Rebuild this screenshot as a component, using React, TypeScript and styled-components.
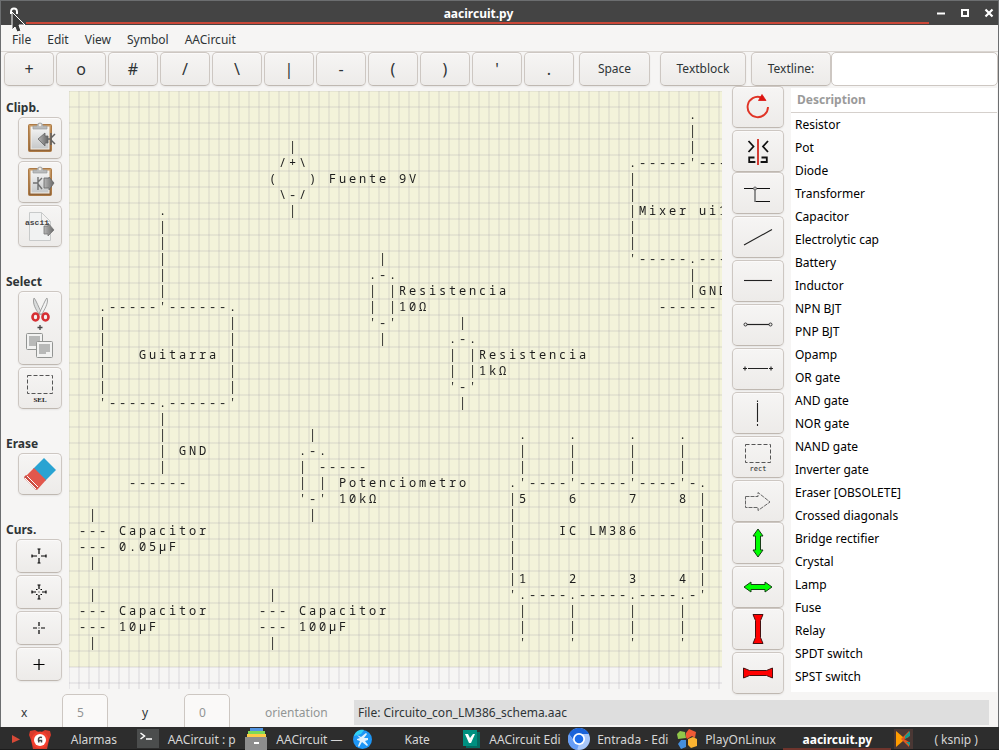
import React from "react";
import styled, { createGlobalStyle } from "styled-components";

const GlobalStyle = createGlobalStyle`
  *, *::before, *::after { box-sizing: border-box; }
  html, body, #root { height: 100%; }
  body {
    margin: 0;
    background: #6c6e70;
    color: #2e3436;
    font: 12px/18px "Noto Sans", "Open Sans", sans-serif;
  }
  button, input { font: inherit; color: inherit; margin: 0; }
`;

const Desktop = styled.div`
  display: flex;
  flex-direction: column;
  height: 100vh;
  min-height: 750px;
`;

const Window = styled.main`
  display: flex;
  flex-direction: column;
  flex: 1;
  min-height: 0;
  margin: 1px 1px 0;
  background: #f6f5f4;
`;

const TitleBar = styled.header`
  position: relative;
  display: grid;
  grid-template-columns: 44px 1fr 60px;
  align-items: center;
  height: 24px;
  background: #444444;
  color: #ffffff;
`;

const Title = styled.h1`
  margin: 0;
  padding: 2px 26px 0 0;
  font-size: 12px;
  line-height: 22px;
  text-align: center;
`;

const TitleAccent = styled.div`
  position: absolute;
  left: 25px;
  right: 69px;
  bottom: 1px;
  height: 2px;
  background: #cb4838;
`;

const TitleIcon = styled.div`
  padding-left: 8px;
  height: 18px;
`;

const Pointer = styled.svg`
  position: absolute;
  left: 9px;
  top: 10px;
  z-index: 2;
`;

const WindowControls = styled.div`
  display: flex;
  justify-content: flex-end;
  gap: 12px;
  padding-right: 3px;
`;

const ControlButton = styled.button`
  width: 12px;
  height: 14px;
  padding: 0;
  border: 0;
  background: none;
  line-height: 0;
`;

const MenuBar = styled.nav`
  display: flex;
  height: 27px;
  padding: 0 3px;
  border-bottom: 1px solid #dad6d2;
`;

const MenuItem = styled.button`
  padding: 3px 8px 0;
  border: 0;
  background: none;
`;

const RaisedButton = styled.button`
  display: flex;
  align-items: center;
  justify-content: center;
  flex: none;
  padding: 0;
  border: 1px solid #cdc7c2;
  border-bottom-color: #bfb8b1;
  border-radius: 5px;
  background: linear-gradient(#f6f5f4, #edebe9);
  box-shadow: inset 0 1px #fbfafa, 0 1px 2px rgba(0, 0, 0, 0.07);
`;

const Toolbar = styled.div`
  display: flex;
  height: 34px;
  padding-left: 3px;
`;

const Glyphs = styled.div`
  display: flex;
  gap: 2px;
  margin-right: 5px;
`;

const GlyphButton = styled(RaisedButton)`
  width: 50px;
  font-size: 16px;
`;

const WordButton = styled(RaisedButton)<{ $width: number; $after?: number }>`
  width: ${(p) => p.$width}px;
  margin-right: ${(p) => p.$after ?? 0}px;
`;

const LineInput = styled.input`
  flex: 1;
  min-width: 0;
  padding: 0 8px;
  border: 1px solid #cdc7c2;
  border-radius: 5px;
  background: #ffffff;
`;

const Workspace = styled.div`
  display: flex;
  flex: 1;
  min-height: 0;
`;

const SideTools = styled.aside`
  display: flex;
  flex-direction: column;
  flex: none;
  gap: 26px;
  width: 68px;
  padding: 13px 7px 0 5px;
`;

const SideGroup = styled.section`
  display: flex;
  flex-direction: column;
  align-items: flex-end;
  gap: 2px;
`;

const SideLabel = styled.h2`
  align-self: flex-start;
  margin: 0 0 -2px;
  font-size: 12px;
  line-height: 18px;
`;

const SideButton = styled(RaisedButton)<{ $w?: number; $h?: number }>`
  width: ${(p) => p.$w ?? 44}px;
  height: ${(p) => p.$h ?? 42}px;
`;

const Sheet = styled.div`
  flex: 1;
  min-width: 0;
  margin: 5px 0 3px;
  overflow: hidden;
  background:
    repeating-linear-gradient(90deg, rgba(150, 146, 160, 0.15) 0 1px, transparent 1px 9px, rgba(150, 146, 160, 0.15) 9px 10px),
    repeating-linear-gradient(rgba(150, 146, 160, 0.15) 0 1px, transparent 1px 15px, rgba(150, 146, 160, 0.15) 15px 16px),
    linear-gradient(#f3f3da, #f3f3da) 0 0 / 100% 576px no-repeat;
`;

const Drawing = styled.div`
  will-change: transform;
`;

const Line = styled.div`
  height: 16px;
  color: #1c1c1c;
  font: 12px/16px "Noto Sans Mono", "DejaVu Sans Mono", monospace;
  white-space: pre;
`;

const Cell = styled.span`
  display: inline-block;
  width: 10px;
  height: 16px;
  vertical-align: top;
`;

const DrawTools = styled.aside`
  display: flex;
  flex-direction: column;
  flex: none;
  width: 52px;
  margin: 0 7px 0 10px;
`;

const DrawGroup = styled.div`
  display: flex;
  flex-direction: column;
  gap: 2px;
`;

const DrawButton = styled(RaisedButton)`
  width: 100%;
  height: 42px;
`;

const Library = styled.section`
  flex: none;
  width: 206px;
  margin: 2px 1px 0 0;
  background: #ffffff;
  color: #000000;
`;

const LibraryHeader = styled.h2`
  height: 25px;
  margin: 0;
  padding: 2px 6px 0;
  border-bottom: 1px solid #d5d0cc;
  color: #9a9a9a;
  font-size: 12px;
  line-height: 20px;
`;

const LibraryList = styled.ul`
  margin: 0;
  padding: 0;
  list-style: none;
`;

const LibraryItem = styled.li`
  height: 23px;
  padding: 0 4px;
  line-height: 23px;
`;

const StatusBar = styled.footer`
  display: flex;
  align-items: center;
  height: 35px;
  padding: 2px 9px 0 20px;
  overflow: hidden;
`;

const CoordLabel = styled.label`
  display: flex;
  align-items: center;
  height: 100%;
`;

const CoordName = styled.span<{ $width: number }>`
  width: ${(p) => p.$width}px;
  padding-top: 4px;
`;

const CoordInput = styled.input`
  align-self: flex-start;
  width: 46px;
  height: 36px;
  padding: 0 14px;
  border: 1px solid #cdc7c2;
  border-radius: 5px 5px 0 0;
  background: #faf9f8;
  color: #929595;
`;

const CoordGap = styled.span`
  width: 34px;
`;

const Orientation = styled.span`
  width: 89px;
  margin-left: 35px;
  padding-top: 4px;
  color: #929595;
`;

const FileStatus = styled.output`
  flex: 1;
  height: 25px;
  margin-top: 4px;
  padding: 0 4px;
  background: #dedede;
  line-height: 25px;
`;

const TaskBar = styled.nav`
  display: flex;
  height: 23px;
  background: #2d2d2d;
  border-bottom: 1px solid #1c1c1c;
`;

const TaskArrow = styled.div`
  flex: none;
  width: 29px;
  padding: 8px 0 0 12px;
  line-height: 0;
`;

const Task = styled.button<{ $active?: boolean }>`
  display: flex;
  align-items: center;
  flex: 1 1 0;
  min-width: 0;
  height: 23px;
  padding: 0;
  border: 0;
  background: none;
  box-shadow: ${(p) => (p.$active ? "inset 0 -2px #6e342c" : "none")};
  color: ${(p) => (p.$active ? "#ffffff" : "#d6d6d6")};
  font-weight: ${(p) => (p.$active ? 700 : 400)};
`;

const TaskLabel = styled.span`
  flex: 1;
  min-width: 0;
  overflow: hidden;
  padding-top: 2px;
  white-space: nowrap;
`;

type Mark = [row: number, col: number, text: string];

const repeatRows = (from: number, to: number, col: number): Mark[] =>
  Array.from({ length: to - from + 1 }, (_, i) => [from + i, col, "|"] as Mark);

const resistor = (row: number, col: number, value: string): Mark[] => [
  [row, col + 1, "|"],
  [row + 1, col, ".-."],
  [row + 2, col, "| |Resistencia"],
  [row + 3, col, "| |" + value],
  [row + 4, col, "'-'"],
  [row + 5, col + 1, "|"],
];

const capacitor = (row: number, col: number, value: string): Mark[] => [
  [row, col + 1, "|"],
  [row + 1, col, "--- Capacitor"],
  [row + 2, col, "--- " + value],
  [row + 3, col + 1, "|"],
];

const marks: Mark[] = [
  [3, 22, "|"],
  [4, 21, "/+\\"],
  [5, 20, "(   ) Fuente 9V"],
  [6, 21, "\\-/"],
  [7, 22, "|"],
  [1, 62, "."],
  ...repeatRows(2, 3, 62),
  [4, 56, ".-----'---"],
  ...repeatRows(5, 9, 56),
  [7, 57, "Mixer ui1"],
  [10, 56, "'-----.---"],
  [11, 62, "|"],
  [12, 62, "|GND"],
  [13, 59, "------"],
  [7, 9, "."],
  ...repeatRows(8, 12, 9),
  [13, 3, ".-----'------."],
  ...repeatRows(14, 18, 3),
  ...repeatRows(14, 18, 16),
  [16, 7, "Guitarra"],
  [19, 3, "'-----.------'"],
  ...repeatRows(20, 23, 9),
  [22, 11, "GND"],
  [24, 6, "------"],
  ...resistor(10, 30, "10Ω"),
  ...resistor(14, 38, "1kΩ"),
  [21, 24, "|"],
  [22, 23, ".-."],
  [23, 23, "| -----"],
  [24, 23, "| | Potenciometro"],
  [25, 23, "'-' 10kΩ"],
  [26, 24, "|"],
  ...capacitor(26, 1, "0.05µF"),
  ...capacitor(31, 1, "10µF"),
  ...capacitor(31, 19, "100µF"),
  ...[45, 50, 56, 61].flatMap((c): Mark[] => [
    [21, c, "."],
    ...repeatRows(22, 23, c),
    ...repeatRows(32, 33, c),
    [34, c, "'"],
  ]),
  [24, 44, ".'----'-----'----'-."],
  ...repeatRows(25, 30, 44),
  ...repeatRows(25, 30, 63),
  [25, 45, "5    6     7    8"],
  [27, 49, "IC LM386"],
  [30, 45, "1    2     3    4"],
  [31, 44, "'.----.-----.----.-'"],
];

const schematic: string[] = (() => {
  const rows = Array.from({ length: 36 }, () => [] as string[]);
  marks.forEach(([row, col, text]) =>
    Array.from(text).forEach((ch, i) => {
      if (ch !== " ") rows[row][col + i] = ch;
    })
  );
  return rows.map((cells) => Array.from(cells, (c) => c ?? " ").join(""));
})();

const parts = [
  "Resistor", "Pot", "Diode", "Transformer", "Capacitor", "Electrolytic cap", "Battery",
  "Inductor", "NPN BJT", "PNP BJT", "Opamp", "OR gate", "AND gate", "NOR gate", "NAND gate",
  "Inverter gate", "Eraser [OBSOLETE]", "Crossed diagonals", "Bridge rectifier", "Crystal",
  "Lamp", "Fuse", "Relay", "SPDT switch", "SPST switch",
];

const glyphs = ["+", "o", "#", "/", "\\", "|", "-", "(", ")", "'", "."];

const Svg = ({ w = 32, h = 32, children }: { w?: number; h?: number; children: React.ReactNode }) => (
  <svg width={w} height={h} viewBox={`0 0 ${w} ${h}`} fill="none" aria-hidden="true">
    {children}
  </svg>
);

const Clipboard = () => (
  <>
    <defs>
      <linearGradient id="board" x1="0" y1="0" x2="0" y2="1">
        <stop offset="0" stopColor="#cc9d66" />
        <stop offset="1" stopColor="#8f6237" />
      </linearGradient>
      <linearGradient id="sheet" x1="0" y1="0" x2="0" y2="1">
        <stop offset="0" stopColor="#f6f6f6" />
        <stop offset="1" stopColor="#c5c7c8" />
      </linearGradient>
      <linearGradient id="arrow" x1="0" y1="0" x2="1" y2="0">
        <stop offset="0" stopColor="#b7b7b7" />
        <stop offset="1" stopColor="#666666" />
      </linearGradient>
    </defs>
    <rect x="4.500" y="2.500" width="23" height="27" rx="1" fill="url(#board)" stroke="#ad7a45" />
    <rect x="7" y="5" width="18" height="22" fill="url(#sheet)" stroke="#f3f0ea" />
    <path d="M9 7V4h4c0-4 6-4 6 0h4v3z" fill="#b9bbbc" stroke="#999b9c" strokeWidth=".7" />
    <circle cx="16" cy="3" r="1.2" fill="#f6eddf" />
  </>
);

const CopyIn = () => (
  <Svg>
    <Clipboard />
    <path d="M22 17h5M27 11v12M27 16l4-4M27 18l4 4" stroke="#626262" strokeWidth="1.5" />
    <path d="M14 17l7-6v3h3v7h-3v3z" fill="url(#arrow)" stroke="#666" strokeWidth=".8" />
  </Svg>
);

const PasteOut = () => (
  <Svg>
    <Clipboard />
    <path d="M9 17h5M14 11v13M14 16l4-4M14 18l4 5" stroke="#707070" strokeWidth="1.4" />
    <path d="M20 12h5v-1l5 6-5 7v-2h-5z" fill="url(#arrow)" stroke="#666" strokeWidth=".8" />
  </Svg>
);

const AsciiOut = () => (
  <Svg w={32} h={34}>
    <path d="M5.500 3.500h12l9 9v19h-21z M17.500 3.500v9h9" fill="#f1f2f2" stroke="#c8caca" />
    <path d="M20 17h4v-3l6 7-6 6v-2h-4z" fill="url(#arrow)" stroke="#777" strokeWidth=".8" />
    <text x="1" y="16" fontFamily="Liberation Mono" fontWeight="700" fontSize="8" fill="#444">ascii</text>
  </Svg>
);

const CutCopy = () => (
  <Svg w={36} h={66}>
    <path d="M12 3c1 0 6 12 8 16l-3 0C14 15 10 8 12 3z" fill="#dadcdc" stroke="#8b8d8d" strokeWidth=".8" />
    <path d="M25 3c-1 0-6 12-8 16l3 0C22 15 27 8 25 3z" fill="#f3f3f3" stroke="#8b8d8d" strokeWidth=".8" />
    <ellipse cx="13.500" cy="22" rx="3" ry="3.500" stroke="#d62f33" strokeWidth="2.600" />
    <ellipse cx="23.500" cy="22" rx="3" ry="3.500" stroke="#d62f33" strokeWidth="2.600" />
    <path d="M18 30v5M15.500 32.500h5" stroke="#444" strokeWidth="1.300" />
    <rect x="4.500" y="38.500" width="16" height="16" rx="1" fill="#f2f2f1" stroke="#929492" />
    <path d="M7 42h11M7 44h11M7 46h11M7 48h11M7 50h7" stroke="#a5a7a5" strokeWidth="1.300" />
    <rect x="14.500" y="46.500" width="16" height="16" rx="1" fill="#f2f2f1" stroke="#929492" />
    <path d="M17 50h11M17 52h11M17 54h11M17 56h11M17 58h7" stroke="#a5a7a5" strokeWidth="1.300" />
  </Svg>
);

const Dashed = ({ label }: { label: string }) => (
  <Svg w={32} h={34}>
    <rect x="3.500" y="4.500" width="25" height="18" stroke="#555" strokeDasharray="4 2" />
    <text
      x="16" y="31" textAnchor="middle" fontSize="7" fill="#222"
      fontFamily={label === "SEL" ? "Liberation Serif" : "DejaVu Sans Mono"}
      fontWeight={label === "SEL" ? 700 : 400}
    >
      {label}
    </text>
  </Svg>
);

const Eraser = () => (
  <Svg>
    <path d="M20 0l12 12-11 11L9 11z" fill="#29a3d2" />
    <path d="M10 10l12 12-9 10L0 20z" fill="#e2574c" />
    <path d="M0 19l2-2 12 12-2 3z" fill="#cb4e44" />
    <path d="M3 18l11 11M1 20l11 11" stroke="#fff" strokeWidth="1" />
  </Svg>
);

const CURSORS = [
  "M8 1v5M8 10v5M1 8h5M10 8h5M6.500 1h3M6.500 15h3M1 6.500v3M15 6.500v3",
  "M8 1v4M8 11v4M1 8h4M11 8h4M6.500 1h3M6.500 15h3M1 6.500v3M15 6.500v3M5 5.500h1.500M9.500 5.500H11M5 10.500h1.500M9.500 10.500H11M7.500 8h1",
  "M8 2v4M8 10v4M2 8h4M10 8h4M7.500 8h1",
  "M8 3v11M2.500 8.500h11",
];

const Stroke = ({ d }: { d: string }) => (
  <Svg><path d={d} stroke="#222" strokeWidth="1.100" /></Svg>
);

const drawGroups: { name: string; icon: React.ReactNode }[][] = [
  [
    {
      name: "Rotate",
      icon: (
        <Svg>
          <path d="M26 16A10.200 10.200 0 1 1 19 6.300" stroke="#e03426" strokeWidth="1.900" />
          <path d="M20 3.500l4 6-7.500 0z" fill="#dc1410" stroke="#dc1410" strokeWidth=".8" />
        </Svg>
      ),
    },
    {
      name: "Mirror",
      icon: (
        <Svg>
          <path d="M6.500 6l5 5.500-5 5.500M26 6l-5 5.500 5 5.500M12.500 22.500H7.200V27h5.300v1M19.500 22.500h5.300V27h-5.300v1" stroke="#111" strokeWidth="1.800" />
          <path d="M16 4v26" stroke="#d22a20" strokeWidth="1.800" />
        </Svg>
      ),
    },
  ],
  [
    {
      name: "Component line",
      icon: (
        <Svg>
          <path d="M2 11.500h26M13 24.500h15" stroke="#111" />
          <path d="M13 12v13" stroke="#777" strokeWidth="1.600" />
          <circle cx="13" cy="11.500" r="1.500" fill="#bbb" stroke="#666" />
        </Svg>
      ),
    },
    { name: "Free line", icon: <Stroke d="M2 24L30 8.500" /> },
    { name: "Line", icon: <Stroke d="M2 15.500h28" /> },
    {
      name: "Line with terminals",
      icon: (
        <Svg>
          <path d="M5 15.500h22" stroke="#222" strokeWidth="1.200" />
          <circle cx="3.500" cy="15.500" r="1.500" stroke="#333" />
          <circle cx="28.500" cy="15.500" r="1.500" stroke="#333" />
        </Svg>
      ),
    },
    { name: "Line with crosses", icon: <Stroke d="M1 15.500h4M3 13.500v4M6 15.500h20M27 15.500h4M29 13.500v4" /> },
    { name: "Vertical line", icon: <Stroke d="M15.500 3.500V5M15.500 6v19M15.500 27v2" /> },
    { name: "Rectangle", icon: <Dashed label="rect" /> },
    {
      name: "Arrow",
      icon: (
        <Svg>
          <path d="M3.500 11.500H16v-4L28 17 16 25.500v-3H3.500z" stroke="#666" strokeDasharray="4 1" />
        </Svg>
      ),
    },
  ],
  [
    {
      name: "Stretch vertically",
      icon: <Svg><path d="M16 2l5 7h-2.500v14H21l-5 7-5-7h2.500V9H11z" fill="#0f0" stroke="#173d17" /></Svg>,
    },
    {
      name: "Stretch horizontally",
      icon: <Svg><path d="M2 16l7-5v2.500h14V11l7 5-7 5v-2.500H9V21z" fill="#0f0" stroke="#173d17" /></Svg>,
    },
  ],
  [
    {
      name: "Shrink vertically",
      icon: <Svg><path d="M11 1.500h10l-2.500 6v17l2.500 6H11l2.500-6v-17z" fill="#f00" stroke="#451010" /></Svg>,
    },
    {
      name: "Shrink horizontally",
      icon: <Svg><path d="M1.500 11v10l6-2.500h17l6 2.500V11l-6 2.500h-17z" fill="#f00" stroke="#451010" /></Svg>,
    },
  ],
];

const tasks: { label: string; active?: boolean; icon?: React.ReactNode }[] = [
  {
    label: "Alarmas",
    icon: (
      <Svg w={22} h={22}>
        <path d="M0 7l1-4 5-1 5 3 5-3 5 1 1 4-2 5-2 9H4L2 12z" fill="#d93a2b" />
        <circle cx="11" cy="12" r="8.500" fill="#f4412f" />
        <circle cx="11" cy="12" r="6" fill="#fff" />
        <path d="M13 9.500c-4-1-4 2-3 5M10 12.500h2.500v2" stroke="#444" strokeWidth="1.500" />
      </Svg>
    ),
  },
  {
    label: "AACircuit : p",
    icon: (
      <Svg w={22} h={20}>
        <rect width="22" height="19" fill="#4b4d4d" />
        <path d="M3.500 4l4 3-4 3M9 10h6" stroke="#fff" strokeWidth="1.500" />
      </Svg>
    ),
  },
  {
    label: "AACircuit —",
    icon: (
      <Svg w={22} h={22}>
        <path d="M5 0h13v4H5z" fill="#5294e2" />
        <path d="M3 3h17v4H3z" fill="#7ed957" />
        <path d="M2 6h19v4H2z" fill="#ffcb45" />
        <path d="M0 9h22v13H0z" fill="#8d8d8d" />
        <path d="M9 15h5" stroke="#fff" strokeWidth="2" />
      </Svg>
    ),
  },
  {
    label: "Kate",
    icon: (
      <Svg w={22} h={22}>
        <circle cx="10.500" cy="11.500" r="9.500" fill="#1e96f5" />
        <path d="M2 8c1-4 5-7 10-6L9 6z" fill="#31d2f7" />
        <path d="M5 7l4 2 5-4 1 1-3 4h4v2l-3 1 3 4-1 1-5-4-3 5-1-1 2-5-3-1v-1l3-1z" fill="#e3f2fd" />
      </Svg>
    ),
  },
  {
    label: "AACircuit Edi",
    icon: (
      <Svg w={22} h={22}>
        <path d="M6 4h14v16H6z" fill="#046b61" />
        <path d="M3 2h14v16H3z" fill="#009080" />
        <path d="M5 6h3l2 4 3-4h2l-4 9H9z" fill="#fff" />
      </Svg>
    ),
  },
  {
    label: "Entrada - Edi",
    icon: (
      <Svg w={22} h={22}>
        <circle cx="11" cy="11" r="11" fill="#a8c7fa" />
        <path d="M1 6C5-2 17-2 21 6H11L7 14z" fill="#1a63d8" />
        <path d="M1 6l5 8 5 2-2 6C1 21-2 12 1 6z" fill="#669df6" />
        <circle cx="11" cy="11" r="6" fill="#fff" />
        <circle cx="11" cy="11" r="4.300" fill="#1a6be8" />
      </Svg>
    ),
  },
  {
    label: "PlayOnLinux",
    icon: (
      <Svg w={22} h={22}>
        <path d="M10 9V5l3-4 7 3-1 6-3-2-5 3z" fill="#f05a35" />
        <path d="M10 10L2 11 1 6l3-3 5 1z" fill="#91c849" />
        <path d="M10 12v7l-5 2-3-5 3-4z" fill="#458edc" />
        <path d="M12 11l5-2 4 2v7l-6 2-3-3z" fill="#fbb331" />
      </Svg>
    ),
  },
  { label: "aacircuit.py", active: true },
  {
    label: "( ksnip )",
    icon: (
      <Svg w={22} h={22}>
        <rect x="3" y="1" width="19" height="20" fill="#4a3734" />
        <path d="M5 3l7 6v4l-7 6z" fill="#ff9d00" />
        <path d="M18 3v6l-5 2 5 3v5l-8-8z" fill="#e25822" />
        <path d="M19 3v5l-5 3v-3zM15 14l4 4v-4z" fill="#129c91" />
      </Svg>
    ),
  },
];

export default function App() {
  return (
    <Desktop>
      <GlobalStyle />
      <Window>
        <TitleBar>
          <TitleIcon>
            <Svg w={10} h={10}>
              <path d="M2 7V4.500a3 3 0 0 1 6 0V7M1 5.500h2M7 5.500h2" stroke="#fff" strokeWidth="1.800" />
            </Svg>
          </TitleIcon>
          <Title>aacircuit.py</Title>
          <WindowControls>
            <ControlButton aria-label="Minimize">
              <Svg w={12} h={12}><path d="M2 6.500h8" stroke="#fff" strokeWidth="2" /></Svg>
            </ControlButton>
            <ControlButton aria-label="Maximize">
              <Svg w={12} h={12}><rect x="3" y="3" width="6" height="6" stroke="#fff" strokeWidth="2" /></Svg>
            </ControlButton>
            <ControlButton aria-label="Close">
              <Svg w={12} h={12}><path d="M2.500 2.500l7 7M9.500 2.500l-7 7" stroke="#fff" strokeWidth="2.200" /></Svg>
            </ControlButton>
          </WindowControls>
          <TitleAccent />
          <Pointer width="16" height="24" viewBox="0 0 16 24" aria-hidden="true">
            <path d="M2 1l13 13H9l2 6-4 1-2-5-3 3z" fill="#3b3b3b" stroke="#fff" />
          </Pointer>
        </TitleBar>

        <MenuBar>
          {["File", "Edit", "View", "Symbol", "AACircuit"].map((m) => (
            <MenuItem key={m}>{m}</MenuItem>
          ))}
        </MenuBar>

        <Toolbar>
          <Glyphs>
            {glyphs.map((g) => <GlyphButton key={g}>{g}</GlyphButton>)}
          </Glyphs>
          <WordButton $width={71} $after={10}>Space</WordButton>
          <WordButton $width={86} $after={5}>Textblock</WordButton>
          <WordButton $width={80}>Textline:</WordButton>
          <LineInput type="text" aria-label="Textline" />
        </Toolbar>

        <Workspace>
          <SideTools>
            <SideGroup>
              <SideLabel>Clipb.</SideLabel>
              <SideButton aria-label="Copy to clipboard"><CopyIn /></SideButton>
              <SideButton aria-label="Paste from clipboard"><PasteOut /></SideButton>
              <SideButton aria-label="Export ascii"><AsciiOut /></SideButton>
            </SideGroup>
            <SideGroup>
              <SideLabel>Select</SideLabel>
              <SideButton $h={74} aria-label="Cut and copy"><CutCopy /></SideButton>
              <SideButton aria-label="Select area"><Dashed label="SEL" /></SideButton>
            </SideGroup>
            <SideGroup>
              <SideLabel>Erase</SideLabel>
              <SideButton aria-label="Erase"><Eraser /></SideButton>
            </SideGroup>
            <SideGroup>
              <SideLabel>Curs.</SideLabel>
              {CURSORS.map((d, i) => (
                <SideButton key={i} $w={46} $h={34} aria-label={`Cursor ${i + 1}`}>
                  <Svg w={16} h={16}><path d={d} stroke="#000" strokeWidth="1.200" /></Svg>
                </SideButton>
              ))}
            </SideGroup>
          </SideTools>

          <Sheet>
            <Drawing>
              {schematic.map((line, row) => (
                <Line key={row}>
                  {Array.from(line).map((ch, col) => <Cell key={col}>{ch}</Cell>)}
                </Line>
              ))}
            </Drawing>
          </Sheet>

          <DrawTools>
            {drawGroups.map((group, i) => (
              <DrawGroup key={i}>
                {group.map((b) => (
                  <DrawButton key={b.name} aria-label={b.name}>{b.icon}</DrawButton>
                ))}
              </DrawGroup>
            ))}
          </DrawTools>

          <Library>
            <LibraryHeader>Description</LibraryHeader>
            <LibraryList>
              {parts.map((p) => <LibraryItem key={p}>{p}</LibraryItem>)}
            </LibraryList>
          </Library>
        </Workspace>

        <StatusBar>
          <CoordLabel>
            <CoordName $width={41}>x</CoordName>
            <CoordInput type="text" defaultValue="5" disabled />
          </CoordLabel>
          <CoordGap />
          <CoordLabel>
            <CoordName $width={42}>y</CoordName>
            <CoordInput type="text" defaultValue="0" disabled />
          </CoordLabel>
          <Orientation>orientation</Orientation>
          <FileStatus>File: Circuito_con_LM386_schema.aac</FileStatus>
        </StatusBar>
      </Window>

      <TaskBar>
        <TaskArrow>
          <Svg w={9} h={9}><path d="M0 0l8 4.500L0 8z" fill="#d64937" /></Svg>
        </TaskArrow>
        {tasks.map((t) => (
          <Task key={t.label} $active={t.active}>
            {t.icon}
            <TaskLabel>{t.label}</TaskLabel>
          </Task>
        ))}
      </TaskBar>
    </Desktop>
  );
}
